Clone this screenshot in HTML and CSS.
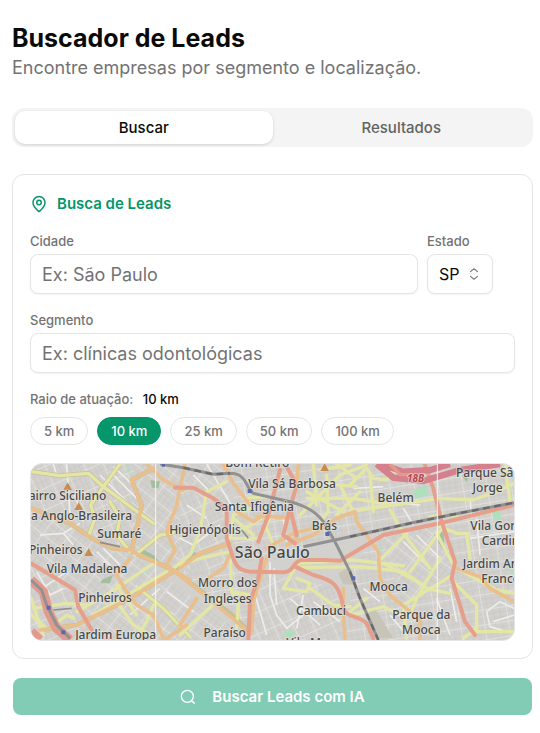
FILE: index.html
```html
<!DOCTYPE html>
<html lang="pt-BR">
<head>
  <meta charset="UTF-8" />
  <meta name="viewport" content="width=device-width, initial-scale=1.0"/>
  <title>Buscador de Leads</title>
  <link rel="stylesheet" href="styles.css">
</head>
<body>
  <main class="page">
    <header class="page-header">
      <h1>Buscador de Leads</h1>
      <p>Encontre empresas por segmento e localização.</p>
    </header>

    <div class="tabs" role="tablist">
      <button type="button" class="tab active" role="tab" aria-selected="true">Buscar</button>
      <button type="button" class="tab" role="tab" aria-selected="false">Resultados</button>
    </div>

    <form id="searchForm">
      <section class="card">
        <h2 class="card-title">
          <svg class="icon-pin" viewBox="0 0 24 24" aria-hidden="true">
            <path d="M20 10c0 4.993-5.539 10.193-7.399 11.799a1 1 0 0 1-1.202 0C9.539 20.193 4 14.993 4 10a8 8 0 0 1 16 0"/>
            <circle cx="12" cy="10" r="3"/>
          </svg>
          Busca de Leads
        </h2>

        <div class="form-row">
          <div class="form-group grow">
            <label for="cidade">Cidade</label>
            <input type="text" id="cidade" name="cidade" placeholder="Ex: São Paulo">
          </div>
          <div class="form-group">
            <label for="estado">Estado</label>
            <div class="select-wrap">
              <select id="estado" name="estado">
                <option>SP</option>
                <option>RJ</option>
                <option>MG</option>
              </select>
              <svg class="icon-chevrons" viewBox="0 0 24 24" aria-hidden="true">
                <path d="m6 16 6 5 6-5"/>
                <path d="m6 8 6-5 6 5"/>
              </svg>
            </div>
          </div>
        </div>

        <div class="form-group">
          <label for="segmento">Segmento</label>
          <input type="text" id="segmento" name="segmento" placeholder="Ex: clínicas odontológicas">
        </div>

        <div class="radius">
          <p class="radius-label" id="radiusLabel">Raio de atuação: <strong>10 km</strong></p>
          <div class="chips" role="group" aria-labelledby="radiusLabel">
            <button type="button" class="chip">5 km</button>
            <button type="button" class="chip active" aria-pressed="true">10 km</button>
            <button type="button" class="chip">25 km</button>
            <button type="button" class="chip">50 km</button>
            <button type="button" class="chip">100 km</button>
          </div>
        </div>

        <div class="map">
          <svg viewBox="33 27 1449 528" preserveAspectRatio="xMidYMid slice" role="img" aria-label="Mapa de São Paulo">
            <defs>
              <pattern id="blocksA" width="66" height="48" patternUnits="userSpaceOnUse" patternTransform="rotate(38)">
                <path class="lot" d="M0 16H66M0 32H66M14 0V48M30 0V48M47 0V48"/>
                <path class="street" d="M0 0H66M0 0V48"/>
              </pattern>
              <pattern id="blocksB" width="54" height="60" patternUnits="userSpaceOnUse" patternTransform="rotate(-24)">
                <path class="lot" d="M0 18H54M0 40H54M12 0V60M27 0V60M41 0V60"/>
                <path class="street" d="M0 0H54M0 0V60"/>
              </pattern>
              <pattern id="blocksC" width="72" height="45" patternUnits="userSpaceOnUse" patternTransform="rotate(-9)">
                <path class="lot" d="M0 15H72M0 30H72M16 0V45M34 0V45M53 0V45"/>
                <path class="street" d="M0 0H72M0 0V45"/>
              </pattern>
            </defs>

            <rect class="land" x="33" y="27" width="1449" height="528"/>
            <path fill="url(#blocksB)" d="M33 27H340L365 150L335 285L33 160ZM33 325L165 405L215 555H33ZM480 100L620 160L640 340L480 345ZM700 345L960 400L980 555H690Z"/>
            <path fill="url(#blocksA)" d="M340 27H640L620 160L480 100L480 345L335 285ZM33 160L335 285L165 405L33 325ZM335 290L690 555H215L165 405ZM1080 230L1260 200L1310 340L1150 450Z"/>
            <path fill="url(#blocksC)" d="M640 27H1482V150L1000 245L640 330ZM1260 200L1482 150V555H980L1000 330L1080 230L1150 450L1310 340ZM480 345L700 345L690 555Z"/>

            <path class="park" d="M368 282L405 303L425 330L360 304ZM245 375L278 360L270 385H243ZM505 310L540 305L525 290ZM392 75L420 80L415 100L395 98ZM1240 240L1270 228L1275 290ZM1325 62L1345 70L1340 80Z"/>
            <path class="field" d="M1180 105L1220 92L1225 120L1185 132ZM1416 165L1440 168L1445 195L1420 192ZM1465 340L1482 335V360ZM318 42L330 40V52L318 54ZM790 535L815 522L825 540L800 550ZM447 250L455 240L455 280L448 280ZM375 352L386 348V360ZM1075 280L1088 277V288Z"/>
            <path class="area" d="M955 355L980 340L1010 390L970 388ZM1035 480L1065 460L1120 550H1075Z"/>

            <g class="minor">
              <path d="M240 60L330 150M270 50L350 130M280 35L345 95M165 120L190 200M100 27L110 60M140 27L150 180M60 240L130 235L180 205M130 235L160 270M60 405L140 350M50 350L90 420L130 400"/>
              <path d="M230 290L270 330M250 280L300 330M480 250L520 270L600 210M500 150L560 190M560 27L640 160M520 60L570 110M420 380L500 330M380 420L460 480M440 410L520 470M330 480L420 400"/>
              <path d="M750 320V420L770 480L800 520L850 480M762 340L770 450M700 400L740 540M850 420L830 520M810 430L900 510M880 440L960 500M790 190L800 260M1000 100L1090 95M1050 140L1200 150M1150 160L1180 210M1350 130L1355 190"/>
              <path d="M1400 470L1440 440L1482 460M1420 500L1482 480M1400 470L1410 515L1460 530M1290 400L1310 500M1350 250L1482 230M1370 190L1380 300M1030 400L1080 440M1190 240L1260 310M1150 260L1230 340M1110 480L1160 540M1250 430L1290 540"/>
            </g>

            <g class="casing">
              <path d="M33 50L120 62L205 55L250 95L345 165L400 205M300 27L250 95L212 150L225 190L205 245M270 140L300 190L290 240L330 290M345 300L420 240L480 230M350 395L430 460L510 545"/>
              <path d="M335 285L350 220L365 150L335 75L400 40M33 160L100 185L150 205L215 250L280 280L335 285M335 290L460 345L630 475L690 530M60 525L170 510L260 465L330 430L460 350L540 295L630 265"/>
            </g>

            <g class="road yellow">
              <path d="M33 50L120 62L205 55L250 95L345 165L400 205M300 27L250 95L212 150L225 190L205 245M270 140L300 190L290 240L330 290M345 300L420 240L480 230M460 340L510 300L540 230L560 110L620 80"/>
              <path d="M40 460L140 445L200 450M33 480L80 520M115 500L140 480L160 490M170 470L260 420L400 325M220 480L440 350M350 395L430 460L510 545M290 440L340 510L400 545M480 540L600 430M350 480L290 390M400 450L380 500L350 545M33 430L70 540"/>
              <path d="M480 330L540 310L630 290M630 280L635 410L655 440L650 520M635 410L690 420M660 230L740 180M640 190L700 240M740 220L760 270M640 250L720 250L750 190M690 160L640 180L630 250M670 130L740 125"/>
              <path d="M840 180L960 60L1040 30M860 130H1000L1120 150M880 27L890 150M920 60L925 170L900 200M860 80L1010 95M950 27L1010 70M950 180L1020 110M860 110L970 170M960 90L1000 170M900 45L990 30"/>
              <path d="M830 330L790 400L860 410L870 385L830 370M870 400L940 450L990 455M830 325L1000 315L1150 332M840 338L1020 335L1150 350L1220 400L1290 415M990 170L1120 150L1260 130L1360 135L1430 110L1482 85M1455 27L1470 140"/>
              <path d="M990 90L1040 40L1060 70L1100 75L1120 40M1050 60L1060 170M1110 165L1150 235L1230 340M1160 235L1080 315M1270 215L1170 350M1250 235L1300 330M1290 365L1150 450M1300 380L1370 450L1370 530H1482M1340 235L1350 310"/>
              <path d="M1260 310L1190 430L1170 480M1310 340L1430 405L1482 415M990 480L1090 455L1160 490M1260 215L1310 235H1345M1100 330L1210 390M1150 450L1160 550M990 470L1040 430M1230 185L1310 180M1330 550L1370 520"/>
            </g>

            <g class="road orange">
              <path d="M33 160L100 185L150 205L215 250L280 280L335 285L350 220L365 150L335 75L400 40M380 27L430 75L490 105M335 290L460 345L510 375M60 525L170 510L260 465L330 430L460 350M330 310L290 360L320 410L350 450L400 480L430 550"/>
              <path d="M495 27L470 150L440 230L465 285L440 330M480 340L540 295L630 265M460 345L540 410L620 475L690 535M480 510L530 430M440 550L500 510M740 310L700 440L695 530M610 27L640 85L690 150M630 300L610 340L565 370"/>
              <path d="M710 185H760L820 190L830 260M800 270L880 240L950 190L1005 170L1010 200L1075 290L1080 370L1110 420L1170 470M740 280L820 235L900 215M970 400L970 460L975 555M835 27L830 100M1200 480V555M1310 340L1380 365L1410 400L1482 440M650 170L700 200L730 180"/>
            </g>

            <g class="road red">
              <path d="M33 325L100 365L165 405L175 455L215 525M465 98H520L580 130L620 160V250L640 310C650 340 665 347 690 350L790 352C825 350 815 320 845 315L910 315L960 317L1090 240L1260 205L1482 150"/>
              <path d="M800 35L830 90L810 160L790 240L825 265M780 45L745 180L715 260M725 310L715 370L690 440L685 555M825 335L880 360C940 375 960 390 970 460C980 490 1015 480 1040 505L1060 550M1215 30L1240 100L1265 200L1305 320L1295 370L1335 500L1365 540M810 160L830 240"/>
            </g>
            <path class="motorway-red" d="M33 375L70 410L85 470L110 520L150 555M33 530L60 555"/>
            <path class="motorway" d="M1070 27L1120 68L1210 78L1320 45L1440 27M1080 27L1150 50L1230 45L1290 27"/>
            <path class="motorway-mid" d="M1110 27L1140 58L1210 62"/>

            <g class="rail">
              <path d="M420 27L490 38L580 58L630 55C680 55 675 95 700 115L810 140C870 155 900 180 920 215L950 270L990 350L1020 430L1075 555M850 275L990 245L1050 232L1170 205L1290 180L1482 143M33 375L65 405L80 450L110 510L150 550"/>
              <path class="dashes" d="M990 245L1050 232L1170 205L1290 180L1482 143M990 350L1020 430L1075 555M490 38L580 58L630 55"/>
            </g>
            <path class="rail-thin" d="M240 262L300 275M100 465L155 460M665 225L685 250"/>

            <path class="station" d="M683 102h12v12h-12zM916 231h12v12h-12zM994 364h12v12h-12zM80 452h12v12h-12zM425 27h10v8h-10zM124 526h12v12h-12z"/>
            <path class="peak" d="M143 82L156 105H130ZM176 142L189 165H163ZM206 280L219 303H193ZM914 25L927 48H901Z"/>
            <path class="seam" d="M407 27V555M1252 27V555"/>

            <g class="place">
              <text x="259" y="135" class="end">Bairro Siciliano</text>
              <text x="336" y="195" class="end">Vila Anglo-Brasileira</text>
              <text x="298" y="250">Sumaré</text>
              <text x="188" y="298" class="end">Pinheiros</text>
              <text x="201" y="355">Vila Madalena</text>
              <text x="255" y="441">Pinheiros</text>
              <text x="287" y="551">Jardim Europa</text>
              <text x="555" y="238">Higienópolis</text>
              <text x="712" y="37">Bom Retiro</text>
              <text x="816" y="98">Vila Sá Barbosa</text>
              <text x="703" y="168">Santa Ifigênia</text>
              <text x="913" y="224">Brás</text>
              <text x="623" y="396">Morro dos</text>
              <text x="623" y="444">Ingleses</text>
              <text x="903" y="481">Cambuci</text>
              <text x="614" y="547">Paraíso</text>
              <text x="862" y="575">Vila Mo</text>
              <text x="1127" y="140">Belém</text>
              <text x="1308" y="65" class="start">Parque São</text>
              <text x="1403" y="112">Jorge</text>
              <text x="1351" y="224" class="start">Vila Gomes</text>
              <text x="1385" y="270" class="start">Cardim</text>
              <text x="1328" y="338" class="start">Jardim Anália</text>
              <text x="1384" y="384" class="start">Franco</text>
              <text x="1106" y="408">Mooca</text>
              <text x="1204" y="491">Parque da</text>
              <text x="1204" y="538">Mooca</text>
              <text x="1187" y="82" class="exit">18B</text>
              <text x="757" y="308" class="city">São Paulo</text>
            </g>
          </svg>
        </div>
      </section>

      <button type="submit" class="submit" disabled>
        <svg class="icon-search" viewBox="0 0 24 24" aria-hidden="true">
          <circle cx="11" cy="11" r="9"/>
          <path d="m21.5 21.5-4-4"/>
        </svg>
        Buscar Leads com IA
      </button>
    </form>
  </main>
</body>
</html>
```

FILE: styles.css
```css
* {
  box-sizing: border-box;
}
body {
  margin: 0;
  background: #fff;
  color: #0a0a0a;
  font-family: Inter, sans-serif;
}
h1, h2, p {
  margin: 0;
}
button, input, select {
  font-family: inherit;
}
.page {
  padding: 22px 7px 18px 12px;
}
.page-header {
  margin-bottom: 27px;
}
h1 {
  font-size: 25px;
  line-height: 32px;
  font-weight: 700;
}
.page-header p {
  font-size: 18px;
  line-height: 27px;
  color: #737373;
}

/* tabs */
.tabs {
  display: grid;
  grid-template-columns: 1fr 1fr;
  height: 39px;
  padding: 3px;
  margin-bottom: 27px;
  background: #f4f4f4;
  border-radius: 12px;
}
.tab {
  border: none;
  border-radius: 10px;
  background: transparent;
  color: #636363;
  font-size: 15px;
  font-weight: 500;
  cursor: pointer;
}
.tab.active {
  background: #fff;
  color: #0a0a0a;
  box-shadow: 0 1px 3px rgba(0,0,0,0.15);
}

/* search card */
.card {
  display: flex;
  flex-direction: column;
  gap: 18px;
  padding: 17px;
  border: 1px solid #e5e5e5;
  border-radius: 12px;
}
.card-title {
  display: flex;
  align-items: center;
  gap: 9px;
  color: #059669;
  font-size: 15px;
  line-height: 23px;
  font-weight: 600;
}
svg {
  display: block;
  fill: none;
}
.icon-pin, .icon-chevrons, .icon-search {
  stroke: currentColor;
  stroke-width: 2;
  stroke-linecap: round;
  stroke-linejoin: round;
}
.icon-pin {
  width: 18px;
  height: 18px;
}
.form-row {
  display: flex;
  gap: 9px;
  padding-right: 22px;
}
.form-group {
  display: flex;
  flex-direction: column;
  gap: 4px;
}
.grow {
  flex: 1;
}
label, .radius-label {
  color: #737373;
  font-size: 13px;
  line-height: 17px;
  font-weight: 500;
}
input, select {
  width: 100%;
  height: 40px;
  padding: 0 11px;
  border: 1px solid #e5e5e5;
  border-radius: 8px;
  background: #fff;
  color: #0a0a0a;
  box-shadow: 0 1px 2px rgba(0,0,0,0.05);
}
input {
  font-size: 18px;
}
input::placeholder {
  color: #737373;
}
.select-wrap {
  position: relative;
  width: 66px;
}
select {
  appearance: none;
  font-size: 16px;
}
.icon-chevrons {
  position: absolute;
  top: 13px;
  right: 12px;
  width: 14px;
  height: 14px;
  color: #7a7a7a;
  pointer-events: none;
}
.radius {
  display: flex;
  flex-direction: column;
  gap: 9px;
}
.radius-label strong {
  margin-left: 6px;
  color: #0a0a0a;
  font-weight: 500;
}
.chips {
  display: flex;
  flex-wrap: wrap;
  gap: 9px;
}
.chip {
  height: 28px;
  padding: 0 13px;
  border: 1px solid #e5e5e5;
  border-radius: 14px;
  background: #fff;
  color: #737373;
  font-size: 13px;
  font-weight: 500;
  cursor: pointer;
}
.chip.active {
  border-color: #059669;
  background: #059669;
  color: #fff;
}

/* map */
.map {
  border: 1px solid #e5e5e5;
  border-radius: 12px;
  overflow: hidden;
}
.map svg {
  width: 100%;
}
.land {
  fill: #d3d1ce;
}
.lot {
  stroke: #c7c5c1;
  stroke-width: 2;
}
.street {
  stroke: #e6e5e2;
  stroke-width: 4;
}
.park {
  fill: #a3bf9f;
}
.field {
  fill: #aee0bd;
}
.area {
  fill: #c8c5b8;
}
.minor {
  stroke: #ededeb;
  stroke-width: 5;
  stroke-linejoin: round;
}
.casing {
  stroke: #c9bf97;
  stroke-width: 14;
  stroke-linejoin: round;
}
.road {
  stroke-width: 11;
  stroke-linejoin: round;
  stroke-linecap: round;
}
.yellow {
  stroke: #e3e6a5;
  stroke-width: 10;
}
.orange {
  stroke: #e9bf8e;
}
.red {
  stroke: #e59f8b;
  stroke-width: 12;
}
.motorway-red {
  stroke: #e39a8e;
  stroke-width: 28;
}
.motorway {
  stroke: #d67f8d;
  stroke-width: 19;
}
.motorway-mid {
  stroke: #e29a8c;
  stroke-width: 10;
}
.rail {
  stroke: #919191;
  stroke-width: 9;
  stroke-linejoin: round;
}
.dashes {
  stroke: #6a6a6a;
  stroke-width: 7;
  stroke-dasharray: 20 14;
}
.rail-thin {
  stroke: #8f8f8f;
  stroke-width: 5;
}
.station {
  fill: #5a68ac;
}
.peak {
  fill: #cb8a4e;
}
.seam {
  stroke: #f5f5f5;
  stroke-width: 3;
}
.place {
  fill: #484848;
  stroke: rgba(235,235,230,0.65);
  stroke-width: 5;
  stroke-linejoin: round;
  paint-order: stroke;
  font-family: "Noto Sans", sans-serif;
  font-size: 36px;
  font-weight: 500;
  text-anchor: middle;
}
.start {
  text-anchor: start;
}
.end {
  text-anchor: end;
}
.city {
  font-size: 48px;
}
.exit {
  fill: #b5494f;
  font-size: 30px;
  font-style: italic;
  font-weight: 700;
}

.submit {
  display: flex;
  align-items: center;
  justify-content: center;
  gap: 16px;
  width: calc(100% - 2px);
  height: 37px;
  margin: 19px 1px 0;
  border: none;
  border-radius: 8px;
  background: #82cbb4;
  color: #fff;
  font-size: 15px;
  font-weight: 600;
}
.icon-search {
  width: 16px;
  height: 16px;
}
```
